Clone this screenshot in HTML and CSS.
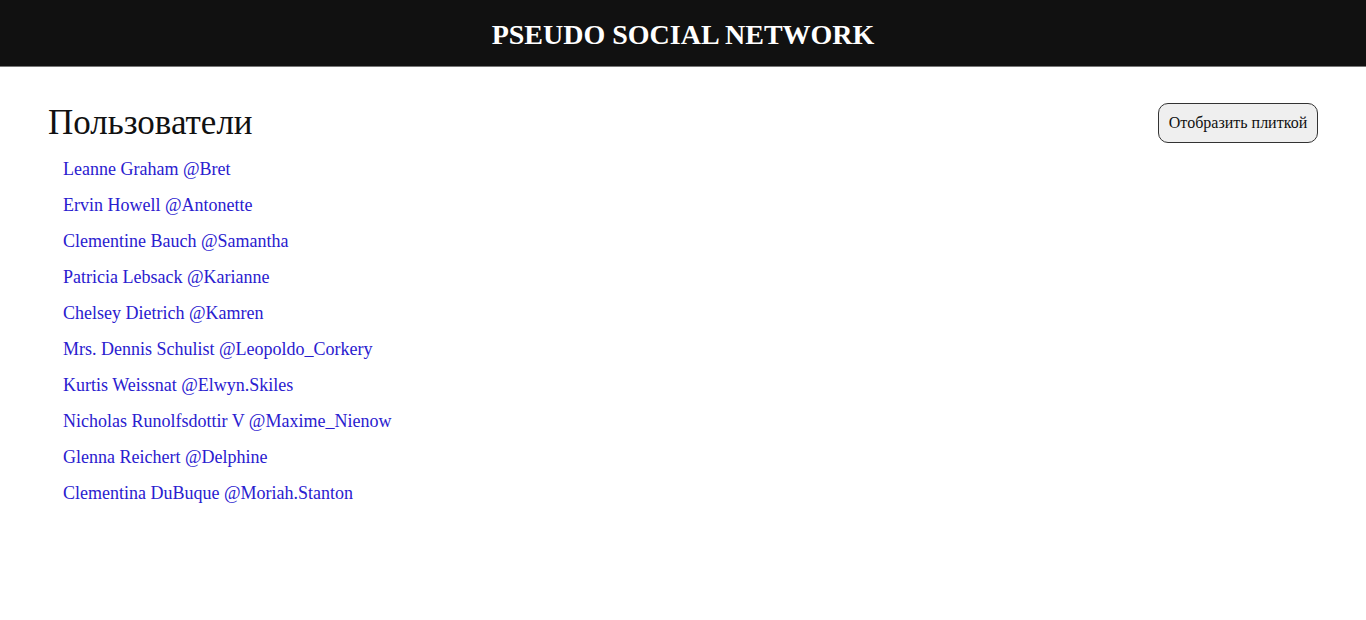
FILE: index.html
```html
<!DOCTYPE html>
<html lang="ru">
<head>
<meta charset="utf-8">
<title>Pseudo Social Network</title>
<link rel="stylesheet" href="styles.css">
</head>
<body>
<header class="topbar">
  <h1 class="brand">PSEUDO SOCIAL NETWORK</h1>
</header>
<main class="page">
  <div class="page-head">
    <h2 class="page-title">Пользователи</h2>
    <button class="view-btn" type="button">Отобразить плиткой</button>
  </div>
  <ul class="users">
    <li><a href="#">Leanne Graham @Bret</a></li>
    <li><a href="#">Ervin Howell @Antonette</a></li>
    <li><a href="#">Clementine Bauch @Samantha</a></li>
    <li><a href="#">Patricia Lebsack @Karianne</a></li>
    <li><a href="#">Chelsey Dietrich @Kamren</a></li>
    <li><a href="#">Mrs. Dennis Schulist @Leopoldo_Corkery</a></li>
    <li><a href="#">Kurtis Weissnat @Elwyn.Skiles</a></li>
    <li><a href="#">Nicholas Runolfsdottir V @Maxime_Nienow</a></li>
    <li><a href="#">Glenna Reichert @Delphine</a></li>
    <li><a href="#">Clementina DuBuque @Moriah.Stanton</a></li>
  </ul>
</main>
</body>
</html>
```
FILE: styles.css
```css
* { box-sizing: border-box; }
body {
  margin: 0;
  font-family: "Liberation Serif", "Times New Roman", serif;
  background: #fff;
  color: #111;
}
.topbar {
  height: 67px;
  background: #111;
  border-bottom: 1px solid #777;
  display: flex;
  align-items: center;
  justify-content: center;
}
.brand {
  margin: 0;
  color: #fff;
  font-size: 28px;
  font-weight: bold;
  line-height: 1;
  padding-top: 4px;
}
.page {
  padding: 36px 48px 0 48px;
}
.page-head {
  display: flex;
  justify-content: space-between;
  align-items: flex-start;
}
.page-title {
  margin: 0;
  font-size: 35px;
  font-weight: normal;
  line-height: 40px;
}
.view-btn {
  width: 160px;
  height: 40px;
  border: 1px solid #333;
  border-radius: 10px;
  background: #efefef;
  font-family: "Liberation Serif", "Times New Roman", serif;
  font-size: 16px;
  color: #111;
  padding: 0;
}
.users {
  list-style: none;
  margin: 8px 0 0 0;
  padding: 0 0 0 15px;
}
.users li {
  height: 36px;
  line-height: 36px;
}
.users a {
  color: #2a20cf;
  text-decoration: none;
  font-size: 18px;
}
```
